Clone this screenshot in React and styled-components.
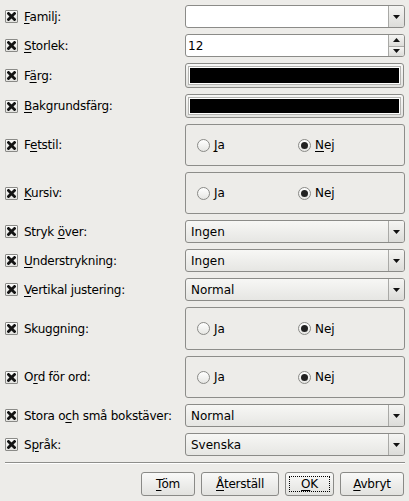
import React from "react";
import styled, { createGlobalStyle } from "styled-components";

const Global = createGlobalStyle`
  html, body { margin: 0; padding: 0; background: #edece9; }
  body { font-family: "DejaVu Sans", "Liberation Sans", sans-serif; font-size: 12px; color: #000; }
`;

const Window = styled.div`
  width: 409px;
  height: 501px;
  background: #edece9;
  box-sizing: border-box;
  display: flex;
  flex-direction: column;
`;

const Form = styled.div`
  display: grid;
  grid-template-columns: 180px 1fr;
  row-gap: 6px;
  padding: 5px 4px 0 5px;
`;

const LabelCell = styled.label`
  display: flex;
  align-items: center;
  gap: 6px;
  white-space: nowrap;
  letter-spacing: -0.25px;
`;

const Mn = styled.span`
  text-decoration: underline;
  text-underline-offset: 2px;
  text-decoration-thickness: 1px;
`;

const CheckBox = styled.span`
  width: 13px;
  height: 13px;
  box-sizing: border-box;
  border: 1px solid #8a8a87;
  border-radius: 1px;
  background: linear-gradient(#fbfbfa, #e3e3e0);
  display: flex;
  align-items: center;
  justify-content: center;
  flex: none;
`;

const Combo = styled.div`
  height: ${p => p.$h || 23}px;
  box-sizing: border-box;
  border: 1px solid #8b8b88;
  border-radius: 3px;
  display: flex;
  background: ${p => (p.$entry ? "#ffffff" : "linear-gradient(#f7f7f5, #e6e6e3)")};
  overflow: hidden;
`;

const ComboText = styled.div`
  flex: 1;
  display: flex;
  align-items: center;
  padding-left: ${p => p.$pad ?? 5}px;
`;

const ArrowPart = styled.div`
  width: 15px;
  border-left: 1px solid #a9a9a6;
  background: linear-gradient(#f5f5f3, #dcdcd9);
  display: flex;
  align-items: center;
  justify-content: center;
`;

const SpinButtons = styled.div`
  width: 15px;
  border-left: 1px solid #a9a9a6;
  display: grid;
  grid-template-rows: 1fr 1fr;
`;

const SpinHalf = styled.div`
  background: linear-gradient(#f5f5f3, #dcdcd9);
  display: flex;
  align-items: center;
  justify-content: center;
  & + & { border-top: 1px solid #a9a9a6; }
`;

const ColorButton = styled.div`
  height: ${p => p.$h}px;
  box-sizing: border-box;
  border: 1px solid #8b8b88;
  border-radius: 3px;
  background: linear-gradient(#f8f8f7, #e2e2df);
  padding: 3px;
  margin-right: 1px;
  display: flex;
`;

const Swatch = styled.div`
  flex: 1;
  background: #000;
  border: 1px solid #fff;
  box-shadow: 0 0 0 1px #b5b5b2;
`;

const RadioFrame = styled.div`
  height: ${p => p.$h}px;
  box-sizing: border-box;
  border: 1px solid #8d8d8a;
  border-radius: 3px;
  display: grid;
  grid-template-columns: 101px 1fr;
  align-items: center;
  padding-left: 11px;
`;

const RadioOption = styled.div`
  display: flex;
  align-items: center;
  gap: 4px;
`;

const RadioCircle = styled.span`
  width: 13px;
  height: 13px;
  box-sizing: border-box;
  border-radius: 50%;
  border: 1px solid #8a8a87;
  background: linear-gradient(#ffffff, #e6e6e3);
  display: flex;
  align-items: center;
  justify-content: center;
  flex: none;
  &::after {
    content: "";
    display: ${p => (p.$on ? "block" : "none")};
    width: 7px;
    height: 7px;
    border-radius: 50%;
    background: #222;
  }
`;

const Separator = styled.div`
  margin: 6px 4px 0 5px;
  height: 0;
  border-top: 1px solid #8e8e8b;
  border-bottom: 1px solid #ffffff;
`;

const ButtonRow = styled.div`
  display: flex;
  justify-content: flex-end;
  gap: 6px;
  padding: 8px 5px 0 0;
`;

const Button = styled.button`
  width: ${p => p.$w}px;
  height: 24px;
  box-sizing: border-box;
  border: 1px solid #8a8a87;
  border-radius: 3px;
  background: linear-gradient(#f9f9f8, #e2e2df);
  font-family: "DejaVu Sans", "Liberation Sans", sans-serif;
  font-size: 12px;
  letter-spacing: -0.25px;
  color: #000;
  padding: 0;
  position: relative;
  display: flex;
  align-items: center;
  justify-content: center;
  ${p =>
    p.$focus
      ? `&::after { content: ""; position: absolute; inset: 3px; border: 1px dotted #000; }`
      : ""}
`;

const Down = () => (
  <svg width="7" height="4" viewBox="0 0 7 4"><path d="M0 0h7L3.5 4z" fill="#111" /></svg>
);
const Up = () => (
  <svg width="7" height="4" viewBox="0 0 7 4"><path d="M0 4h7L3.5 0z" fill="#111" /></svg>
);

const Check = () => (
  <CheckBox>
    <svg width="9" height="9" viewBox="0 0 9 9">
      <path d="M1.5 1.5L7.5 7.5M7.5 1.5L1.5 7.5" stroke="#141414" strokeWidth="2.8" strokeLinecap="square" />
    </svg>
  </CheckBox>
);

const Label = ({ children }) => (
  <LabelCell>
    <Check />
    <span>{children}</span>
  </LabelCell>
);

const Select = ({ value, entry }) => (
  <Combo $entry={entry}>
    <ComboText>{value}</ComboText>
    <ArrowPart><Down /></ArrowPart>
  </Combo>
);

const Radios = ({ h, mn }) => (
  <RadioFrame $h={h}>
    <RadioOption><RadioCircle />{mn ? <span><Mn>J</Mn>a</span> : <span>Ja</span>}</RadioOption>
    <RadioOption><RadioCircle $on />{mn ? <span><Mn>N</Mn>ej</span> : <span>Nej</span>}</RadioOption>
  </RadioFrame>
);

export default function App() {
  return (
    <Window>
      <Global />
      <Form>
        <Label><Mn>F</Mn>amilj:</Label>
        <Select entry value="" />

        <Label><Mn>S</Mn>torlek:</Label>
        <Combo $entry>
          <ComboText $pad={2}>12</ComboText>
          <SpinButtons>
            <SpinHalf><Up /></SpinHalf>
            <SpinHalf><Down /></SpinHalf>
          </SpinButtons>
        </Combo>

        <Label>F<Mn>ä</Mn>rg:</Label>
        <ColorButton $h={25}><Swatch /></ColorButton>

        <Label><Mn>B</Mn>akgrundsfärg:</Label>
        <ColorButton $h={24}><Swatch /></ColorButton>

        <Label>F<Mn>e</Mn>tstil:</Label>
        <Radios h={42} mn />

        <Label><Mn>K</Mn>ursiv:</Label>
        <Radios h={42} />

        <Label>Stryk <Mn>ö</Mn>ver:</Label>
        <Select value="Ingen" />

        <Label><Mn>U</Mn>nderstrykning:</Label>
        <Select value="Ingen" />

        <Label><Mn>V</Mn>ertikal justering:</Label>
        <Select value="Normal" />

        <Label>Skuggning:</Label>
        <Radios h={43} />

        <Label>O<Mn>r</Mn>d för ord:</Label>
        <Radios h={42} />

        <Label>Stora o<Mn>c</Mn>h små bokstäver:</Label>
        <Select value="Normal" />

        <Label>S<Mn>p</Mn>råk:</Label>
        <Select value="Svenska" />
      </Form>
      <Separator />
      <ButtonRow>
        <Button $w={54}><span><Mn>T</Mn>öm</span></Button>
        <Button $w={78}><span><Mn>Å</Mn>terställ</span></Button>
        <Button $w={49} $focus><span><Mn>O</Mn>K</span></Button>
        <Button $w={64}><span><Mn>A</Mn>vbryt</span></Button>
      </ButtonRow>
    </Window>
  );
}
